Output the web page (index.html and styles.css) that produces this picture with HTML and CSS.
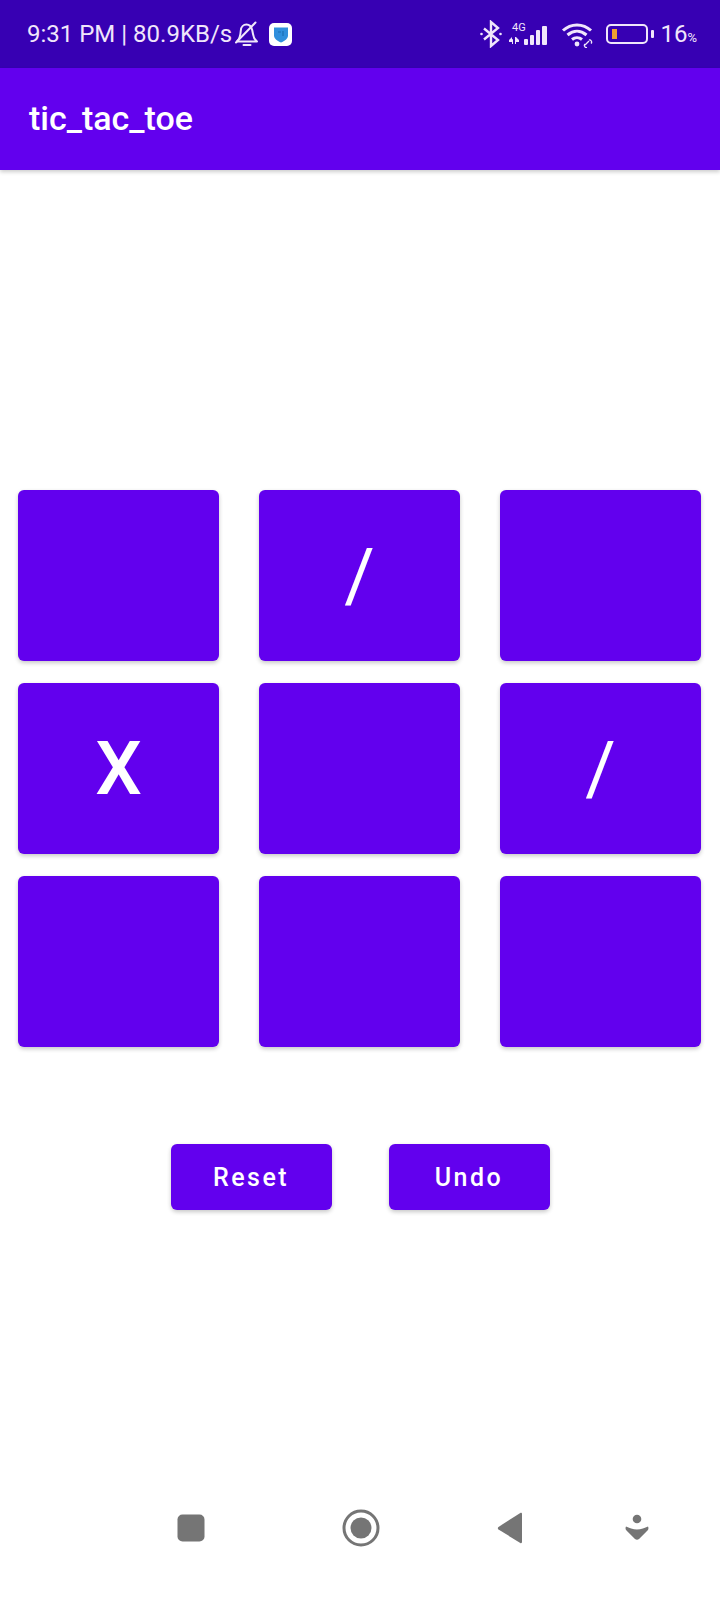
FILE: index.html
```html
<!DOCTYPE html>
<html lang="en">
<head>
    <meta charset="UTF-8">
    <meta name="viewport" content="width=device-width, initial-scale=1.0">
    <title>tic_tac_toe</title>
    <link rel="stylesheet" href="styles.css">
</head>
<body>
    <div class="status-bar">
        <div class="status-left">
            <span class="status-text">9:31 PM | 80.9KB/s</span>
            <svg class="bell" width="26" height="26" viewBox="0 0 26 26" fill="none" stroke="#f0e6fb" stroke-width="2" stroke-linejoin="round" stroke-linecap="round">
                <path d="M3 20.5h20c-2.5-2-3.5-4-4-7.5l-.8-4C17.300 5.500 15 3.500 12.500 3.500 9.500 3.500 7 6 6.800 9.500 6.500 14 5.500 18 3 20.500z"/>
                <path d="M9.500 24h7"/>
                <path d="M2 21.500 21.500 1.500"/>
            </svg>
            <span class="app-badge">
                <svg width="16" height="17" viewBox="0 0 16 17"><path d="M1 1.500h14v8c0 3.500-3.500 5.500-7 7-3.500-1.500-7-3.500-7-7z" fill="#2f8fdc"/><path d="M5 6h3M10 5v5" stroke="#1c6fb5" stroke-width="1.200" fill="none"/></svg>
            </span>
        </div>
        <div class="status-right">
            <svg width="24" height="28" viewBox="0 0 24 28" fill="none" stroke="#f0e6fb" stroke-width="2.400">
                <path d="M5 8.500 19 20l-7 6V2l7 6L5 19.500"/>
                <circle cx="2.500" cy="14" r="1.300" fill="#f0e6fb" stroke="none"/>
                <circle cx="21.500" cy="14" r="1.300" fill="#f0e6fb" stroke="none"/>
            </svg>
            <svg class="signal" width="46" height="28" viewBox="0 0 46 28" fill="#f0e6fb">
                <text x="5" y="11" class="net-label">4G</text>
                <path d="M2 20l3-3v2.200h1V24H5v-2H2zM8 17h1l3 3v2H9v2H8z"/>
                <rect x="17" y="19" width="4" height="6" rx="1"/>
                <rect x="23" y="15" width="4" height="10" rx="1"/>
                <rect x="29" y="10" width="4" height="15" rx="1"/>
                <rect x="35" y="6" width="5" height="19" rx="1"/>
            </svg>
            <svg width="34" height="28" viewBox="0 0 34 28" fill="none" stroke="#f0e6fb" stroke-width="3">
                <path d="M2 10.500C10 3 22 3 30 10.500"/>
                <path d="M6.500 15c6-5 13-5 19 0"/>
                <path d="M11 19.500c3-2.500 7-2.500 10 0"/>
                <circle cx="16" cy="24" r="2.400" fill="#f0e6fb" stroke="none"/>
                <path d="M24 25l4-4M26 27.500c-2 .5-3.500-2-2-3.500M28 20c2-.5 3.500 2 2 3.500" stroke-width="1.300"/>
            </svg>
            <div class="battery">
                <span class="battery-fill"></span>
            </div>
            <span class="battery-cap"></span>
            <span class="battery-text">16<small>%</small></span>
        </div>
    </div>

    <header class="app-bar">tic_tac_toe</header>

    <main class="game">
        <div class="board">
            <button class="cell"></button>
            <button class="cell slash">/</button>
            <button class="cell"></button>
            <button class="cell">X</button>
            <button class="cell"></button>
            <button class="cell slash">/</button>
            <button class="cell"></button>
            <button class="cell"></button>
            <button class="cell"></button>
        </div>
        <div class="actions">
            <button class="action">Reset</button>
            <button class="action">Undo</button>
        </div>
    </main>

    <nav class="nav-bar">
        <svg class="nav-square" width="28" height="28" viewBox="0 0 28 28"><rect x="0.500" y="0.500" width="27" height="27" rx="5" fill="#757575"/></svg>
        <svg class="nav-home" width="38" height="38" viewBox="0 0 38 38"><circle cx="19" cy="19" r="17" fill="none" stroke="#757575" stroke-width="3"/><circle cx="19" cy="19" r="10.500" fill="#757575"/></svg>
        <svg class="nav-back" width="26" height="32" viewBox="0 0 26 32"><path d="M25 2v28c0 1-.8 1.500-1.700 1L1.500 17.500c-.9-.6-.9-2 0-2.600L23.300 1c.9-.5 1.700 0 1.700 1z" fill="#757575"/></svg>
        <svg class="nav-assist" width="24" height="28" viewBox="0 0 24 28" fill="#757575"><circle cx="12" cy="5" r="4.300"/><path d="M1 12.500c3 1.500 7 3 11 3s8-1.500 11-3c.8 1.500.5 3-.5 4L14 25c-1.200 1-2.800 1-4 0l-8.500-8.500c-1-1-1.300-2.500-.5-4z"/></svg>
    </nav>
</body>
</html>
```

FILE: styles.css
```css
* {
    box-sizing: border-box;
}

body {
    margin: 0;
    width: 720px;
    height: 1600px;
    background-color: #fff;
    font-family: Roboto, sans-serif;
    display: flex;
    flex-direction: column;
}

.status-bar {
    height: 68px;
    background-color: #3700b3;
    color: #f0e6fb;
    display: flex;
    align-items: center;
    justify-content: space-between;
    padding: 0 23px 0 27px;
}

.status-left {
    display: flex;
    align-items: center;
}

.status-text {
    font-size: 24px;
}

.bell {
    margin-left: 2px;
}

.app-badge {
    width: 23px;
    height: 23px;
    margin-left: 9px;
    border-radius: 5px;
    background-color: #fff;
    display: flex;
    align-items: center;
    justify-content: center;
}

.status-right {
    display: flex;
    align-items: center;
}

.net-label {
    font-size: 11px;
}

.signal {
    margin-left: 4px;
}

.status-right svg:nth-child(3) {
    margin-left: 8px;
}

.battery {
    width: 42px;
    height: 20px;
    margin-left: 11px;
    padding: 3px 4px;
    border: 2px solid #f0e6fb;
    border-radius: 5px;
}

.battery-fill {
    display: block;
    width: 5px;
    height: 100%;
    background-color: #f0a030;
}

.battery-cap {
    width: 3px;
    height: 8px;
    margin-left: 3px;
    background-color: #f0e6fb;
    border-radius: 1px;
}

.battery-text {
    margin-left: 6px;
    font-size: 24px;
}

.battery-text small {
    font-size: 13px;
}

.app-bar {
    height: 102px;
    padding: 0 0 3px 29px;
    background-color: #6200ee;
    color: #fff;
    font-size: 34px;
    font-weight: 500;
    display: flex;
    align-items: center;
    box-shadow: 0 2px 4px rgba(0, 0, 0, 0.2);
}

.game {
    flex: 1;
    padding-top: 320px;
}

.board {
    display: grid;
    grid-template-columns: repeat(3, 201px);
    grid-auto-rows: 171px;
    column-gap: 40px;
    row-gap: 22px;
    margin-left: 18px;
}

button {
    border: none;
    padding: 0;
    background-color: #6200ee;
    color: #fff;
    font-family: Roboto, sans-serif;
    font-weight: 500;
    border-radius: 6px;
    box-shadow: 0 2px 4px rgba(0, 0, 0, 0.22);
}

.cell {
    font-size: 74px;
}

.slash {
    font-weight: 400;
}

.actions {
    display: flex;
    justify-content: center;
    gap: 57px;
    margin-top: 97px;
}

.action {
    width: 161px;
    height: 66px;
    font-size: 25px;
    letter-spacing: 2.500px;
}

.nav-bar {
    height: 114px;
    display: flex;
    align-items: center;
    padding-bottom: 30px;
}

.nav-square {
    margin-left: 177px;
}

.nav-home {
    margin-left: 137px;
}

.nav-back {
    margin-left: 117px;
}

.nav-assist {
    margin-left: 102px;
}
```
